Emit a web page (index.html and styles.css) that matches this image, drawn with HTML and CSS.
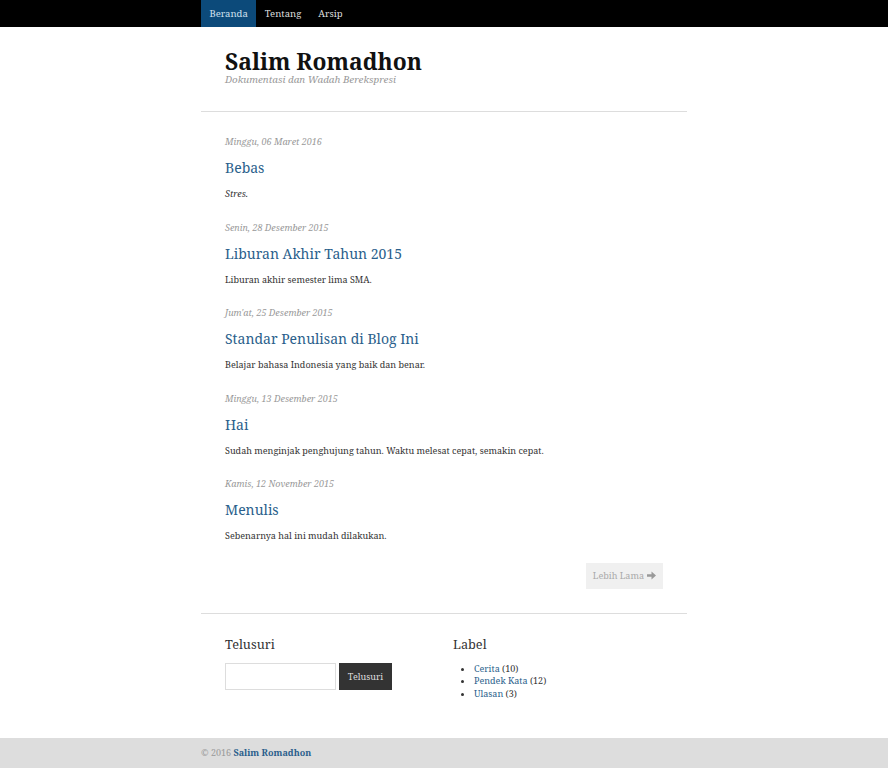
FILE: index.html
```html
<!DOCTYPE html>
<html>
<head>
<meta charset="utf-8">
<link rel="stylesheet" href="styles.css">
</head>
<body>
<nav class="topnav">
  <div class="wrap navwrap">
    <a class="navlink active" href="#">Beranda</a>
    <a class="navlink" href="#">Tentang</a>
    <a class="navlink" href="#">Arsip</a>
  </div>
</nav>
<div class="wrap">
  <header class="masthead">
    <h1 class="site-title">Salim Romadhon</h1>
    <p class="site-desc">Dokumentasi dan Wadah Berekspresi</p>
  </header>
  <main class="posts">
    <article class="post">
      <div class="date">Minggu, 06 Maret 2016</div>
      <h2 class="post-title"><a href="#">Bebas</a></h2>
      <p class="excerpt"><em>Stres.</em></p>
    </article>
    <article class="post">
      <div class="date">Senin, 28 Desember 2015</div>
      <h2 class="post-title"><a href="#">Liburan Akhir Tahun 2015</a></h2>
      <p class="excerpt">Liburan akhir semester lima SMA.</p>
    </article>
    <article class="post">
      <div class="date">Jum'at, 25 Desember 2015</div>
      <h2 class="post-title"><a href="#">Standar Penulisan di Blog Ini</a></h2>
      <p class="excerpt">Belajar bahasa Indonesia yang baik dan benar.</p>
    </article>
    <article class="post">
      <div class="date">Minggu, 13 Desember 2015</div>
      <h2 class="post-title"><a href="#">Hai</a></h2>
      <p class="excerpt">Sudah menginjak penghujung tahun. Waktu melesat cepat, semakin cepat.</p>
    </article>
    <article class="post">
      <div class="date">Kamis, 12 November 2015</div>
      <h2 class="post-title"><a href="#">Menulis</a></h2>
      <p class="excerpt">Sebenarnya hal ini mudah dilakukan.</p>
    </article>
    <div class="pager">
      <a class="older" href="#">Lebih Lama <svg class="arrow" width="9" height="9" viewBox="0 0 10 10"><path d="M0 3.5h5V0.5L10 5 5 9.5V6.5H0z" fill="currentColor"/></svg></a>
    </div>
  </main>
  <section class="widgets">
    <div class="widget search">
      <h3 class="widget-title">Telusuri</h3>
      <form class="searchform">
        <input class="searchbox" type="text">
        <button class="searchbtn" type="button">Telusuri</button>
      </form>
    </div>
    <div class="widget labels">
      <h3 class="widget-title">Label</h3>
      <ul class="labellist">
        <li><a href="#">Cerita</a> (10)</li>
        <li><a href="#">Pendek Kata</a> (12)</li>
        <li><a href="#">Ulasan</a> (3)</li>
      </ul>
    </div>
  </section>
</div>
<footer class="footer">
  <div class="wrap">
    <span class="copy">© 2016</span> <a class="footlink" href="#">Salim Romadhon</a>
  </div>
</footer>
</body>
</html>
```
FILE: styles.css
```css
* { box-sizing: border-box; }
html, body { margin: 0; padding: 0; }
body {
  font-family: "Noto Serif", "Droid Serif", "DejaVu Serif", serif;
  color: #333;
  background: #fff;
  font-size: 9px;
}
a { text-decoration: none; color: #2b5f8c; }
.wrap { width: 486px; margin: 0 auto; }
.topnav { background: #000; height: 27px; }
.navwrap { display: flex; height: 27px; }
.navlink {
  color: #ddd;
  font-size: 9.5px;
  line-height: 27px;
  padding: 0 8.5px;
}
.navlink.active { background: #0c4a7a; color: #cfe0ee; }
.masthead {
  padding: 23px 24px 25px;
  border-bottom: 1px solid #ddd;
}
.site-title {
  margin: 0;
  font-size: 22.8px;
  line-height: 24px;
  font-weight: bold;
  color: #111;
}
.site-desc {
  margin: 0;
  font-style: italic;
  color: #999;
  font-size: 9.8px;
  line-height: 12px;
}
.posts { padding: 24px 24px 24px; border-bottom: 1px solid #ddd; }
.post { margin-bottom: 21.5px; }
.date { font-style: italic; color: #999; font-size: 9px; line-height: 12px; }
.post-title { margin: 11px 0 0; font-size: 14px; font-weight: normal; line-height: 18px; }
.post-title a { color: #2b5f8c; }
.excerpt { margin: 11px 0 0; font-size: 9px; line-height: 12px; color: #333; }
.pager { display: flex; justify-content: flex-end; margin-top: -1px; }
.older {
  background: #f0f0f0;
  color: #aaa;
  font-size: 9px;
  line-height: 26px;
  height: 26px;
  padding: 0 7px;
  display: inline-flex;
  align-items: center;
  gap: 3px;
}
.arrow { color: #999; }
.widgets { display: flex; padding: 22px 24px 37.5px; }
.widget.search { width: 228px; }
.widget-title { margin: 0 0 11px; font-size: 12.7px; font-weight: normal; line-height: 16px; color: #333; }
.searchform { display: flex; gap: 3px; }
.searchbox { width: 111px; height: 27px; border: 1px solid #ddd; margin: 0; padding: 0; }
.searchbtn {
  width: 53px; height: 27px; border: 0; background: #333; color: #ddd;
  font-family: inherit; font-size: 9px; margin: 0; padding: 0;
}
.labellist { margin: 0; padding-left: 21px; font-size: 9px; line-height: 12.5px; }
.footer { background: #ddd; height: 30px; line-height: 30px; font-size: 9px; }
.copy { color: #999; }
.footlink { font-weight: bold; color: #2b5f8c; }
```
